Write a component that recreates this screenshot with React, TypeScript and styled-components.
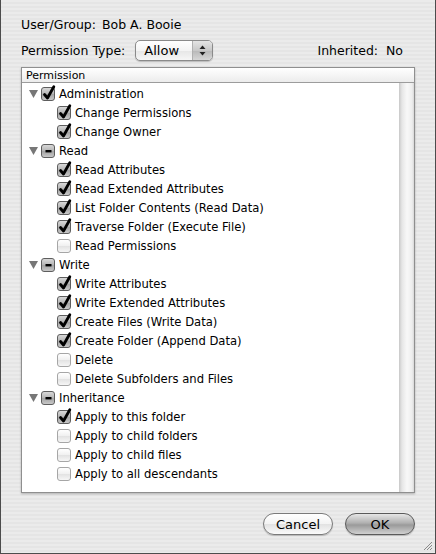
import * as React from 'react'
import styled, { createGlobalStyle, css } from 'styled-components'

const GlobalStyle = createGlobalStyle`
  html, body { margin: 0; padding: 0; }
  body {
    font-family: "DejaVu Sans", "Liberation Sans", sans-serif;
    font-size: 12px;
    color: #000;
    background: #e9e9e9;
  }
`

type CheckState = 'on' | 'off' | 'mixed'

type Item = { label: string; state: CheckState }
type Group = { label: string; state: CheckState; items: Item[] }

const groups: Group[] = [
  {
    label: 'Administration',
    state: 'on',
    items: [
      { label: 'Change Permissions', state: 'on' },
      { label: 'Change Owner', state: 'on' },
    ],
  },
  {
    label: 'Read',
    state: 'mixed',
    items: [
      { label: 'Read Attributes', state: 'on' },
      { label: 'Read Extended Attributes', state: 'on' },
      { label: 'List Folder Contents (Read Data)', state: 'on' },
      { label: 'Traverse Folder (Execute File)', state: 'on' },
      { label: 'Read Permissions', state: 'off' },
    ],
  },
  {
    label: 'Write',
    state: 'mixed',
    items: [
      { label: 'Write Attributes', state: 'on' },
      { label: 'Write Extended Attributes', state: 'on' },
      { label: 'Create Files (Write Data)', state: 'on' },
      { label: 'Create Folder (Append Data)', state: 'on' },
      { label: 'Delete', state: 'off' },
      { label: 'Delete Subfolders and Files', state: 'off' },
    ],
  },
  {
    label: 'Inheritance',
    state: 'mixed',
    items: [
      { label: 'Apply to this folder', state: 'on' },
      { label: 'Apply to child folders', state: 'off' },
      { label: 'Apply to child files', state: 'off' },
      { label: 'Apply to all descendants', state: 'off' },
    ],
  },
]

const Window = styled.div`
  box-sizing: border-box;
  width: 436px;
  height: 554px;
  border: 1px solid #4c4c4c;
  border-top: none;
  background: repeating-linear-gradient(
    to bottom,
    #ebebeb 0px,
    #ebebeb 2px,
    #e5e5e5 2px,
    #e5e5e5 4px
  );
  padding: 15px 20px 0 20px;
  display: flex;
  flex-direction: column;
  position: relative;
`

const InfoLine = styled.div`
  height: 18px;
  display: flex;
  align-items: center;
  gap: 6px;
  font-size: 12.5px;
`

const TypeLine = styled.div`
  height: 23px;
  margin-top: 6px;
  display: flex;
  align-items: center;
  font-size: 12.5px;
`

const Spacer = styled.div`
  flex: 1;
`

const Popup = styled.div`
  box-sizing: border-box;
  margin-left: 10px;
  width: 78px;
  height: 21px;
  border: 1px solid #8a8a8a;
  border-radius: 5px;
  background: linear-gradient(to bottom, #ffffff 0%, #f4f4f4 50%, #e6e6e6 51%, #f6f6f6 100%);
  box-shadow: 0 1px 1px rgba(0, 0, 0, 0.2);
  display: flex;
  align-items: center;
  overflow: hidden;
  font-size: 13px;
`

const PopupLabel = styled.span`
  flex: 1;
  padding-left: 8px;
`

const PopupArrows = styled.span`
  width: 19px;
  height: 100%;
  border-left: 1px solid #b0b0b0;
  background: linear-gradient(to bottom, #e4e4e4 0%, #c8c8c8 50%, #b8b8b8 51%, #d6d6d6 100%);
  display: flex;
  align-items: center;
  justify-content: center;
`

const ListBox = styled.div`
  box-sizing: border-box;
  margin-top: 5px;
  height: 426px;
  background: #fff;
  border: 1px solid #8f8f8f;
  box-shadow: 0 1px 2px rgba(0, 0, 0, 0.25);
  display: flex;
  flex-direction: column;
`

const ListHeader = styled.div`
  height: 14px;
  padding-left: 4px;
  display: flex;
  align-items: center;
  font-size: 11px;
  background: linear-gradient(to bottom, #ffffff, #ececec);
  border-bottom: 1px solid #9c9c9c;
`

const ListBody = styled.div`
  flex: 1;
  display: flex;
  min-height: 0;
`

const Rows = styled.div`
  flex: 1;
  padding-top: 1px;
`

const Scrollbar = styled.div`
  width: 15px;
  background: linear-gradient(to right, #c8c8c8 0px, #e6e6e6 3px, #f8f8f8 8px, #eeeeee 13px, #d8d8d8 15px);
`

const Row = styled.div<{ $child?: boolean }>`
  height: 19px;
  display: flex;
  align-items: center;
  padding-left: ${(p) => (p.$child ? '35px' : '7px')};
  font-size: 11.6px;
  white-space: nowrap;
`

const Disclosure = styled.span`
  width: 9px;
  height: 8px;
  margin-right: 3px;
  display: flex;
  align-items: center;
`

const Box = styled.span<{ $state: CheckState }>`
  box-sizing: border-box;
  position: relative;
  width: 14px;
  height: 14px;
  margin-right: 4px;
  border-radius: 3px;
  border: 1px solid ${(p) => (p.$state === 'off' ? '#a6a6a6' : '#5e5e5e')};
  ${(p) =>
    p.$state === 'off'
      ? css`
          background: linear-gradient(to bottom, #ffffff 0%, #f0f0f0 50%, #e2e2e2 51%, #f6f6f6 100%);
        `
      : css`
          background: linear-gradient(to bottom, #d8d8d8 0%, #b4b4b4 50%, #a2a2a2 51%, #c8c8c8 100%);
        `}
  flex: none;
`

const Mark = styled.svg`
  position: absolute;
  left: 0px;
  top: -3px;
  overflow: visible;
`

const Footer = styled.div`
  margin-top: 20px;
  display: flex;
  justify-content: flex-end;
  gap: 12px;
`

const Button = styled.div<{ $default?: boolean }>`
  box-sizing: border-box;
  width: 70px;
  height: 22px;
  border-radius: 11px;
  border: 1px solid ${(p) => (p.$default ? '#5a5a5a' : '#7a7a7a')};
  display: flex;
  align-items: center;
  justify-content: center;
  font-size: 13px;
  box-shadow: 0 1px 1px rgba(0, 0, 0, 0.2);
  background: ${(p) =>
    p.$default
      ? 'linear-gradient(to bottom, #e6e6e6 0%, #b0b0b0 45%, #9a9a9a 55%, #d0d0d0 100%)'
      : 'linear-gradient(to bottom, #ffffff 0%, #f3f3f3 50%, #e2e2e2 52%, #fafafa 100%)'};
`

const Grip = styled.svg`
  position: absolute;
  right: 2px;
  bottom: 2px;
`

const CheckBox = ({ state }: { state: CheckState }) => (
  <Box $state={state}>
    {state === 'on' && (
      <Mark width="14" height="16" viewBox="0 0 14 16">
        <path d="M2.5 9.5 L5.5 13 L11.8 1.8" stroke="#000" strokeWidth="2.8" fill="none" strokeLinecap="round" strokeLinejoin="round" />
      </Mark>
    )}
    {state === 'mixed' && (
      <Mark width="14" height="16" viewBox="0 0 14 16">
        <rect x="3.5" y="8" width="6" height="2.4" fill="#000" />
      </Mark>
    )}
  </Box>
)

export default function App() {
  return (
    <>
      <GlobalStyle />
      <Window>
        <InfoLine>
          <span>User/Group:</span>
          <span>Bob A. Booie</span>
        </InfoLine>
        <TypeLine>
          <span>Permission Type:</span>
          <Popup>
            <PopupLabel>Allow</PopupLabel>
            <PopupArrows>
              <svg width="7" height="11" viewBox="0 0 7 11">
                <path d="M3.5 0.5 L6.5 4 L0.5 4 Z" fill="#222" />
                <path d="M3.5 10.5 L6.5 7 L0.5 7 Z" fill="#222" />
              </svg>
            </PopupArrows>
          </Popup>
          <Spacer />
          <span>Inherited:&nbsp; No</span>
          <span style={{ width: 12 }} />
        </TypeLine>
        <ListBox>
          <ListHeader>Permission</ListHeader>
          <ListBody>
            <Rows>
              {groups.map((g) => (
                <React.Fragment key={g.label}>
                  <Row>
                    <Disclosure>
                      <svg width="9" height="8" viewBox="0 0 9 8">
                        <path d="M0 0 L9 0 L4.5 8 Z" fill="#777" />
                      </svg>
                    </Disclosure>
                    <CheckBox state={g.state} />
                    <span>{g.label}</span>
                  </Row>
                  {g.items.map((it) => (
                    <Row $child key={it.label}>
                      <CheckBox state={it.state} />
                      <span>{it.label}</span>
                    </Row>
                  ))}
                </React.Fragment>
              ))}
            </Rows>
            <Scrollbar />
          </ListBody>
        </ListBox>
        <Footer>
          <Button>Cancel</Button>
          <Button $default>OK</Button>
        </Footer>
        <Grip width="12" height="12" viewBox="0 0 12 12">
          <path d="M11 3 L3 11 M11 6 L6 11 M11 9 L9 11" stroke="#8a8a8a" strokeWidth="1" />
        </Grip>
      </Window>
    </>
  )
}
